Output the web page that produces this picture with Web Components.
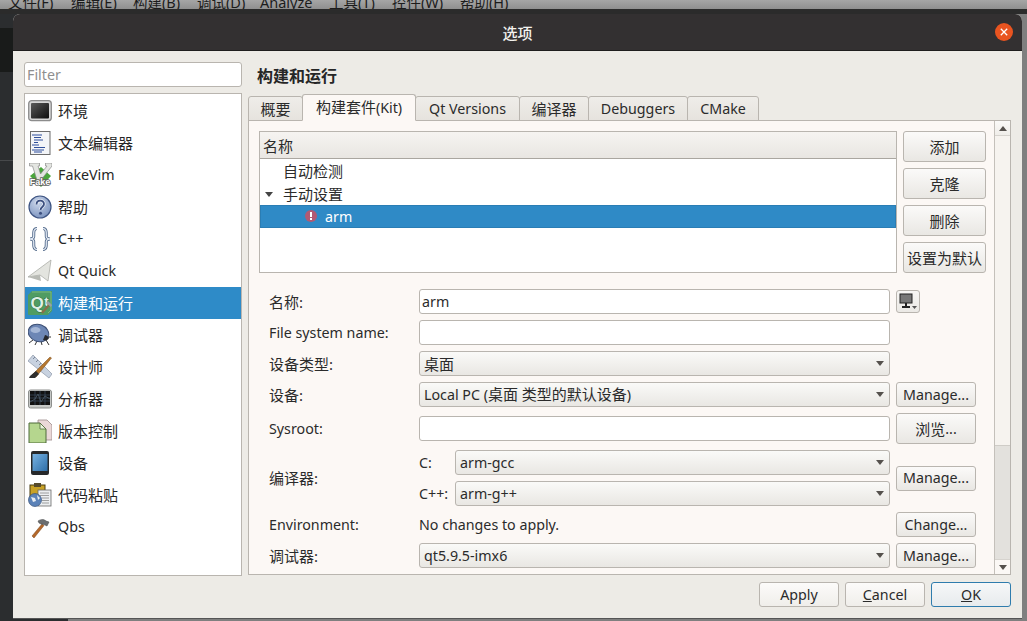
<!DOCTYPE html>
<html lang="zh-CN">
<head>
<meta charset="UTF-8">
<title>选项</title>
<style>
    html, body { margin: 0; height: 100%; overflow: hidden; }
    body {
        background: #7f7f7f;
        font: 15px/20px "Noto Sans", "Noto Sans CJK SC", sans-serif;
        color: #2b2b2b;
    }
    /* latin text runs a bit smaller than the cjk */
    .l { display: inline-block; font-size: 14.25px; }
    nav-item .l { margin-bottom: 1px; }
    .s { font-size: 14.25px; }
</style>
</head>
<body>
<template id="icons">
    <svg data-icon="env" viewBox="0 0 24 24"><defs><linearGradient id="e1" x1="0" y1="0" x2="1" y2="1"><stop offset="0" stop-color="#5a5a5a"/><stop offset="1" stop-color="#0c0c0c"/></linearGradient></defs><rect x=".7" y="1.7" width="22.6" height="20" rx="3" fill="#d6d6d6" stroke="#8c8c8c" stroke-width="1.3"/><rect x="3" y="4" width="18" height="15.4" rx="1" fill="url(#e1)"/></svg>
    <svg data-icon="text" viewBox="0 0 24 24"><rect x="2.5" y=".5" width="19.5" height="23" fill="#f3f5f8" stroke="#6d6d6d"/><path d="M4 4h10M6 6.5h7M6 9h9M6 11.5h4M4 14h7M6 16.5h11M4 19h12M6 21h8" stroke="#2f4f9b" stroke-width="1.2" fill="none"/></svg>
    <svg data-icon="vim" viewBox="0 0 24 24"><path d="M13 4l10 9-10 11L2 13z" fill="#4aa63c"/><path d="M1.500 0h10v3H10l2.500 8L19 3h-1.500V0H24v3L13 17H9L4.500 3h-3z" fill="#e3e5e1" stroke="#8b8b8b" stroke-width=".7"/><text x="12" y="21.500" font-family="Liberation Sans" font-size="9" font-weight="700" fill="#fff" stroke="#5f615f" stroke-width="1.600" paint-order="stroke" text-anchor="middle">Fake</text></svg>
    <svg data-icon="help" viewBox="0 0 24 24"><defs><radialGradient id="h1" cx=".4" cy=".3" r=".8"><stop offset="0" stop-color="#ccd7ea"/><stop offset="1" stop-color="#748dbb"/></radialGradient></defs><circle cx="12" cy="12" r="11" fill="url(#h1)" stroke="#3f5583" stroke-width="1.200"/><path d="M8.500 9.500c0-5 7.500-5 7.500-.5 0 3-3.500 3-3.500 6" fill="none" stroke="#e6ecf6" stroke-width="3.400"/><path d="M8.500 9.500c0-5 7.500-5 7.500-.5 0 3-3.500 3-3.500 6" fill="none" stroke="#3c5080" stroke-width="1.800"/><circle cx="12.500" cy="18.300" r="1.500" fill="#3c5080"/></svg>
    <svg data-icon="cpp" viewBox="0 0 24 24"><path d="M9 1.500C4 1.500 6.500 9 5.500 10.500 5 11.500 3 12 2 12c1 0 3 .5 3.500 1.500C6.500 15 4 22.500 9 22.500M15 1.500c5 0 2.500 7.500 3.500 9 .5 1 2.500 1.500 3.500 1.500-1 0-3 .5-3.500 1.500-1 1.500 1.500 9-3.500 9" fill="none" stroke="#4f6788" stroke-width="3"/><path d="M9 1.500C4 1.500 6.500 9 5.500 10.500 5 11.500 3 12 2 12c1 0 3 .5 3.500 1.500C6.500 15 4 22.500 9 22.500M15 1.500c5 0 2.500 7.500 3.500 9 .5 1 2.500 1.500 3.500 1.500-1 0-3 .5-3.500 1.500-1 1.500 1.500 9-3.500 9" fill="none" stroke="#e3eaf5" stroke-width="1.300"/></svg>
    <svg data-icon="quick" viewBox="0 0 24 24"><path d="M0 18L23 1 20 22 12 16z" fill="#e3e4df" stroke="#a3a59f" stroke-width=".7"/><path d="M0 18l12-2 11-15-11 15 1 6z" fill="#b8bab4"/></svg>
    <svg data-icon="build" viewBox="0 0 24 24"><path d="M4 0h20v20l-4 4H1a1 1 0 0 1-1-1V4z" fill="#4f9c62"/><path d="M4 1h19v18l-3 3" fill="none" stroke="#86bf8c" stroke-width=".8"/><text x="9" y="18" font-family="Liberation Sans" font-size="17" font-weight="700" fill="#dff0e4" stroke="#2f6d44" stroke-width="1" paint-order="stroke" text-anchor="middle">Q</text><text x="18.500" y="15" font-family="Liberation Sans" font-size="13" font-weight="700" fill="#dff0e4" stroke="#2f6d44" stroke-width="1" paint-order="stroke" text-anchor="middle">t</text><path d="M14 22l7-8" stroke="#8a6d4a" stroke-width="2"/><path d="M18 12l5 4 1-2-4-4z" fill="#9aa0a5"/></svg>
    <svg data-icon="debug" viewBox="0 0 24 24"><path d="M1 20l4-3M7 22l2-4M14 22l-1-4M21 22l-3-5M23 14l-4 0" stroke="#333" stroke-width="1" fill="none"/><ellipse cx="10.500" cy="10" rx="10.500" ry="8.500" fill="#6d87b5" stroke="#3c4f74" transform="rotate(20 10.500 10)"/><ellipse cx="7.500" cy="7" rx="5" ry="3" fill="#a5b7d6"/><path d="M15 17c3 1 5 0 6-2-1-2-3-3-4-3z" fill="#26282c"/></svg>
    <svg data-icon="design" viewBox="0 0 24 24"><path d="M0 6l5-6 19 19-3 4z" fill="#c8d2e0" stroke="#8c97a8" stroke-width=".7"/><path d="M5 4l2-2M8 7l2-2M11 10l2-2M14 13l2-2" stroke="#7c8799" fill="none"/><path d="M3 21L22 2l1.500 1L8 22z" fill="#b5772f" stroke="#7a4a17" stroke-width=".5"/><path d="M8 16l3 3-4 4H1l1-2z" fill="#2f2f2f"/></svg>
    <svg data-icon="analyze" viewBox="0 0 24 24"><rect x=".5" y="3" width="23" height="18" rx="2" fill="#c6c8c6" stroke="#8d8f8d"/><rect x="2" y="4" width="20" height="14" fill="#111"/><path d="M2 8h20M2 11h20M2 14h20M7 4v14M12 4v14M17 4v14" stroke="#3d4f63" stroke-width=".7"/><path d="M2 15l5-3 3-5 3 8 4-6 5 3" stroke="#4c5c68" stroke-width=".8" fill="none"/></svg>
    <svg data-icon="vcs" viewBox="0 0 24 24"><path d="M10 1h9l5 5v15H10z" fill="#ead8d8" stroke="#9c8c8c" stroke-width=".8"/><path d="M1 4h11l6 6v14H1z" fill="#b5d68e" stroke="#4f6b3a"/><path d="M12 4v6h6z" fill="#e9f3dd" stroke="#4f6b3a" stroke-width=".8"/></svg>
    <svg data-icon="device" viewBox="0 0 24 24"><rect x="3" y="0" width="18" height="24" rx="2" fill="#26282a"/><defs><linearGradient id="d1" x1="0" y1="0" x2="1" y2="1"><stop offset="0" stop-color="#77b2e2"/><stop offset="1" stop-color="#2d6ea8"/></linearGradient></defs><rect x="4.500" y="3" width="15" height="17" fill="url(#d1)"/></svg>
    <svg data-icon="paste" viewBox="0 0 24 24"><rect x="2" y="2" width="15" height="18" fill="#c9a227" stroke="#4a3c10"/><rect x="6" y="0" width="7" height="4" fill="#554a2b"/><rect x="10" y="7" width="13" height="16" fill="#eceff1" stroke="#6a6a6a" stroke-width=".8"/><path d="M12 10h9M12 12.500h9M14 15h7M14 17.500h7M14 20h7" stroke="#8a8a8a" stroke-width=".8"/><circle cx="7" cy="17" r="6.500" fill="#5b82b8" stroke="#38537c" stroke-width=".7"/><path d="M3 14l4 1 1 3-3 1zM9 12l3 3-2 2z" fill="#e8edf2"/></svg>
    <svg data-icon="qbs" viewBox="0 0 24 24"><path d="M4 21L14 9l2 1.500L6 23z" fill="#b4682a" stroke="#7b4518" stroke-width=".5"/><path d="M10 6c3-2 6-2 8 0l3 1-2 4-3-1.500-3-.5-2-1z" fill="#6b6e70" stroke="#3e4042" stroke-width=".5"/></svg>
</template>

<script>
    // small helper: every element gets an open shadow root from this
    function shadow(el, css, html) {
        el.attachShadow({ mode: 'open' }).innerHTML = `<style>${css}</style>${html}`
    }
    const iconTemplate = document.getElementById('icons')

    class DesktopBackdrop extends HTMLElement {
        connectedCallback() {
            const menu = [['文件(F)', 63], ['编辑(E)', 62], ['构建(B)', 64], ['调试(D)', 63], ['Analyze', 69], ['工具(T)', 63], ['控件(W)', 68], ['帮助(H)', 60]]
            shadow(this, `
                :host { position: absolute; inset: 0; display: block; overflow: hidden; }
                .menu { height: 9px; overflow: hidden; display: flex; padding-left: 8px; font-size: 14.5px;
                    background: linear-gradient(#a6a6a6, #8f8f8f); color: #1c1c1c; }
                .menu span { flex: none; margin-top: -8px; }
                .top { height: 5px; background: #2b2b2b; }
                .side { position: absolute; left: 0; top: 14px; bottom: 0; width: 68px; background: #2b2d2f; }
                .dark { position: absolute; left: 0; top: 14px; width: 68px; height: 44px; background: #191b1a; }
                .line { position: absolute; left: 0; top: 146px; width: 68px; height: 1px; background: #47494b; }
            `, `<div class="menu">${menu.map(m => `<span style="width:${m[1]}px">${m[0]}</span>`).join('')}</div>
                <div class="top"></div>
                <div class="side"><div class="dark"></div><div class="line"></div></div>`)
        }
    }

    class OptionsDialog extends HTMLElement {
        connectedCallback() {
            shadow(this, `
                :host { position: absolute; left: 13px; top: 14px; width: 1009px; height: 604px; display: flex; flex-direction: column;
                    background: #edebe6; border-radius: 7px 7px 0 0; overflow: hidden; box-shadow: 0 1px 0 #555; }
                header { height: 36px; flex: none; background: #333031; border-bottom: 1px solid #1f1e1e; color: #f4f2ef;
                    display: flex; align-items: center; justify-content: center; position: relative; font-weight: 500; }
                header span { margin-top: 2px; }
                .close { position: absolute; left: 982px; top: 9px; width: 18px; height: 18px; }
                main { flex: 1; display: grid; grid-template-columns: 218px 763px; column-gap: 6px; padding: 11px 0 0 11px; grid-template-rows: 1fr 43px; }
                footer { grid-column: 1 / 3; display: flex; justify-content: flex-end; gap: 6px; padding-top: 6px; align-items: flex-start; }
                .left { display: flex; flex-direction: column; gap: 6px; height: 514px; }
                .right { display: flex; flex-direction: column; height: 514px; }
                h1 { font-size: 16px; font-weight: 700; margin: 0 0 0 9px; height: 32px; line-height: 28px; color: #262626; }
            `, `<header><span>选项</span>
                    <svg class="close" viewBox="0 0 18 18"><circle cx="9" cy="9" r="9" fill="#e95420"/><path d="M5.800 5.800l6.400 6.400M12.200 5.800l-6.400 6.400" stroke="#fff" stroke-width="1.300"/></svg>
                </header>
                <main>
                    <div class="left"><slot name="filter"></slot><slot name="nav"></slot></div>
                    <div class="right"><h1><slot name="title"></slot></h1><slot name="pane"></slot></div>
                    <footer><slot name="actions"></slot></footer>
                </main>`)
        }
    }

    class QtInput extends HTMLElement {
        connectedCallback() {
            shadow(this, `
                :host { display: flex; align-items: center; box-sizing: border-box; height: 25px; background: #fff;
                    border: 1px solid #b9b5af; border-radius: 3px; padding: 0 2px; }
                :host([placeholder]) { color: #8f8f8f; }
            `, `<slot></slot>`)
        }
    }

    class QtButton extends HTMLElement {
        connectedCallback() {
            shadow(this, `
                :host { display: flex; align-items: center; justify-content: center; box-sizing: border-box; height: 25px; flex: none;
                    background: linear-gradient(#fbfaf9, #e9e7e3); border: 1px solid #b9b5af; border-radius: 3px; white-space: nowrap; }
                :host([tall]) { height: 31px; }
                :host([action]) { width: 80px; background: linear-gradient(#fcfbfa, #f0eeea); }
                :host([default]) { border-color: #2f7cad; background: linear-gradient(#f6f7f8, #e7ebed); }
            `, `<slot></slot>`)
        }
    }

    class QtCombo extends HTMLElement {
        connectedCallback() {
            shadow(this, `
                :host { display: flex; align-items: center; justify-content: space-between; box-sizing: border-box; height: 25px;
                    padding: 0 5px 0 4px; background: linear-gradient(#fafaf8, #e9e7e3); border: 1px solid #b9b5af; border-radius: 3px; white-space: nowrap; }
                i { width: 0; height: 0; border: 4px solid transparent; border-top: 5px solid #55514d; border-bottom: 0; margin-right: 0; }
            `, `<span><slot></slot></span><i></i>`)
        }
    }

    class NavList extends HTMLElement {
        connectedCallback() {
            shadow(this, `
                :host { display: block; box-sizing: border-box; height: 483px; background: #fff; border: 1px solid #b9b5af; padding: 1px 0 0; }
            `, `<slot></slot>`)
        }
    }

    class NavItem extends HTMLElement {
        connectedCallback() {
            const icon = iconTemplate.content.querySelector(`[data-icon="${this.getAttribute('icon')}"]`).cloneNode(true)
            shadow(this, `
                :host { display: flex; align-items: center; height: 32px; padding-left: 3px; gap: 6px; color: #262626; }
                :host([selected]) { background: #2e8bc8; color: #fff; }
                svg { width: 24px; height: 24px; flex: none; }
            `, `<slot></slot>`)
            this.shadowRoot.prepend(icon)
        }
    }

    class TabBar extends HTMLElement {
        connectedCallback() {
            shadow(this, `
                :host { display: flex; height: 27px; align-items: flex-end; position: relative; z-index: 1; margin-bottom: -1px; }
            `, `<slot></slot>`)
        }
    }

    class TabItem extends HTMLElement {
        connectedCallback() {
            shadow(this, `
                :host { display: flex; align-items: center; justify-content: center; box-sizing: border-box; height: 25px; width: var(--w);
                    margin-right: -1px; background: linear-gradient(#efede9, #e6e3de); border: 1px solid #b9b5af; border-radius: 3px 3px 0 0; white-space: nowrap; }
                :host([active]) { height: 27px; background: #fcf8f5; border-bottom-color: #fcf8f5; position: relative; z-index: 1; }
            `, `<slot></slot>`)
        }
    }

    class TabPane extends HTMLElement {
        connectedCallback() {
            shadow(this, `
                :host { display: flex; height: 455px; box-sizing: border-box; background: #fcf8f5; border: 1px solid #b9b5af; }
                .content { flex: 1; min-width: 0; padding: 10px 0 0 10px; }
            `, `<div class="content"><slot></slot></div><slot name="bar"></slot>`)
        }
    }

    class ScrollBar extends HTMLElement {
        connectedCallback() {
            shadow(this, `
                :host { display: flex; flex-direction: column; width: 15px; flex: none; border-left: 1px solid #c4c0ba; background: #e3e1dd; }
                .btn { height: 14px; flex: none; display: flex; align-items: center; justify-content: center; background: #fbf8f5; }
                .up { border-bottom: 1px solid #d6d3ce; background: linear-gradient(#fbfaf8, #efede9); }
                .thumb { height: 309px; background: #f6f3ef; border-bottom: 1px solid #cfccc7; }
                .track { flex: 1; }
                .down { border-top: 1px solid #d6d3ce; }
                i { width: 0; height: 0; border: 4px solid transparent; }
                .up i { border-top: 0; border-bottom: 5px solid #55514d; }
                .down i { border-bottom: 0; border-top: 5px solid #55514d; }
            `, `<div class="btn up"><i></i></div><div class="thumb"></div><div class="track"></div><div class="btn down"><i></i></div>`)
        }
    }

    class KitTree extends HTMLElement {
        connectedCallback() {
            shadow(this, `
                :host { display: flex; flex-direction: column; box-sizing: border-box; width: 638px; height: 142px; background: #fff; border: 1px solid #b9b5af; }
                .head { height: 27px; flex: none; box-sizing: border-box; padding-left: 3px; line-height: 28px; background: linear-gradient(#f6f4f1, #e9e6e2); border-bottom: 1px solid #aaa6a0; }
                .rows { padding-top: 1px; }
            `, `<div class="head">名称</div><div class="rows"><slot></slot></div>`)
        }
    }

    class KitRow extends HTMLElement {
        connectedCallback() {
            shadow(this, `
                :host { display: flex; align-items: center; height: 22px; padding-left: calc(var(--indent, 23px)); position: relative; }
                :host([selected]) { height: 23px; background: #2f8ac6; color: #fff; box-shadow: inset 0 0 0 1px #2a7db4; }
                .arrow { position: absolute; left: 5px; top: 9px; width: 0; height: 0; border: 4.500px solid transparent; border-top: 5px solid #444; border-bottom: 0; }
                svg { position: absolute; left: 45px; top: 5px; width: 12px; height: 12px; }
            `, `${this.hasAttribute('open') ? '<i class="arrow"></i>' : ''}${this.hasAttribute('error') ? '<svg viewBox="0 0 12 12"><circle cx="6" cy="6" r="6" fill="#b25a73"/><rect x="5" y="2" width="2" height="5" fill="#fff"/><rect x="5" y="8" width="2" height="2" fill="#fff"/></svg>' : ''}<slot></slot>`)
        }
    }

    class KitForm extends HTMLElement {
        connectedCallback() {
            shadow(this, `
                :host { display: grid; grid-template-columns: 150px 471px 86px; row-gap: 6px; margin: 16px 0 0 10px;
                    grid-template-rows: 25px 25px 25px 25px 31px 56px 25px 25px; align-items: center; }
                ::slotted(.side) { margin-left: 6px; }
            `, `<slot></slot>`)
        }
    }

    class CompilerPair extends HTMLElement {
        connectedCallback() {
            shadow(this, `
                :host { display: grid; grid-template-columns: 36px 435px; row-gap: 6px; align-items: center; }
            `, `<slot></slot>`)
        }
    }

    const tags = {
        'desktop-backdrop': DesktopBackdrop, 'options-dialog': OptionsDialog, 'qt-input': QtInput, 'qt-button': QtButton,
        'qt-combo': QtCombo, 'nav-list': NavList, 'nav-item': NavItem, 'tab-bar': TabBar, 'tab-item': TabItem, 'tab-pane': TabPane,
        'scroll-bar': ScrollBar, 'kit-tree': KitTree, 'kit-row': KitRow, 'kit-form': KitForm, 'compiler-pair': CompilerPair
    }
    Object.keys(tags).forEach(t => customElements.define(t, tags[t]))
</script>

<desktop-backdrop></desktop-backdrop>
<options-dialog>
    <qt-input slot="filter" placeholder><span class="l">Filter</span></qt-input>
    <nav-list slot="nav">
        <nav-item icon="env">环境</nav-item>
        <nav-item icon="text">文本编辑器</nav-item>
        <nav-item icon="vim"><span class="l">FakeVim</span></nav-item>
        <nav-item icon="help">帮助</nav-item>
        <nav-item icon="cpp"><span class="l">C++</span></nav-item>
        <nav-item icon="quick"><span class="l">Qt Quick</span></nav-item>
        <nav-item icon="build" selected>构建和运行</nav-item>
        <nav-item icon="debug">调试器</nav-item>
        <nav-item icon="design">设计师</nav-item>
        <nav-item icon="analyze">分析器</nav-item>
        <nav-item icon="vcs">版本控制</nav-item>
        <nav-item icon="device">设备</nav-item>
        <nav-item icon="paste">代码粘贴</nav-item>
        <nav-item icon="qbs"><span class="l">Qbs</span></nav-item>
    </nav-list>
    <span slot="title">构建和运行</span>
    <div slot="pane">
        <tab-bar>
            <tab-item style="--w:55px;margin-left:0">概要</tab-item>
            <tab-item style="--w:114px" active><span>构建套件<span class="s">(Kit)</span></span></tab-item>
            <tab-item style="--w:105px"><span class="l">Qt Versions</span></tab-item>
            <tab-item style="--w:70px">编译器</tab-item>
            <tab-item style="--w:100px"><span class="l">Debuggers</span></tab-item>
            <tab-item style="--w:72px"><span class="l">CMake</span></tab-item>
        </tab-bar>
        <tab-pane>
            <div style="display:flex;gap:6px">
                <kit-tree>
                    <kit-row style="margin-bottom:1px">自动检测</kit-row>
                    <kit-row open>手动设置</kit-row>
                    <kit-row selected error style="--indent:65px"><span class="l">arm</span></kit-row>
                </kit-tree>
                <div style="display:flex;flex-direction:column;gap:6px;width:83px">
                    <qt-button tall>添加</qt-button>
                    <qt-button tall>克隆</qt-button>
                    <qt-button tall>删除</qt-button>
                    <qt-button tall>设置为默认</qt-button>
                </div>
            </div>
            <kit-form>
                <span>名称:</span>
                <qt-input><span class="l">arm</span></qt-input>
                <qt-button class="side" style="width:24px;height:23px;background:linear-gradient(#f7f6f4,#ebe9e5)"><svg width="20" height="18" viewBox="0 0 20 18"><rect x="2" y="1" width="12" height="9" fill="#777" stroke="#222"/><path d="M8 10v3M4 14h8" stroke="#222" stroke-width="2"/><path d="M14 13h5l-2.500 3z" fill="#555"/></svg></qt-button>

                <span class="l">File system name:</span>
                <qt-input></qt-input>
                <span></span>

                <span>设备类型:</span>
                <qt-combo>桌面</qt-combo>
                <span></span>

                <span>设备:</span>
                <qt-combo><span class="s">Local PC (</span>桌面 类型的默认设备<span class="s">)</span></qt-combo>
                <qt-button class="side"><span class="l">Manage...</span></qt-button>

                <span class="l">Sysroot:</span>
                <qt-input></qt-input>
                <qt-button class="side" tall>浏览<span class="s">...</span></qt-button>

                <span>编译器:</span>
                <compiler-pair>
                    <span class="l">C:</span><qt-combo><span class="l">arm-gcc</span></qt-combo>
                    <span class="l">C++:</span><qt-combo><span class="l">arm-g++</span></qt-combo>
                </compiler-pair>
                <qt-button class="side"><span class="l">Manage...</span></qt-button>

                <span class="l">Environment:</span>
                <span class="l">No changes to apply.</span>
                <qt-button class="side"><span class="l">Change...</span></qt-button>

                <span>调试器:</span>
                <qt-combo><span class="l">qt5.9.5-imx6</span></qt-combo>
                <qt-button class="side"><span class="l">Manage...</span></qt-button>
            </kit-form>
            <scroll-bar slot="bar"></scroll-bar>
        </tab-pane>
    </div>
    <qt-button slot="actions" action><span class="l">Apply</span></qt-button>
    <qt-button slot="actions" action><span class="l"><u>C</u>ancel</span></qt-button>
    <qt-button slot="actions" action default><span class="l"><u>O</u>K</span></qt-button>
</options-dialog>
</body>
</html>
